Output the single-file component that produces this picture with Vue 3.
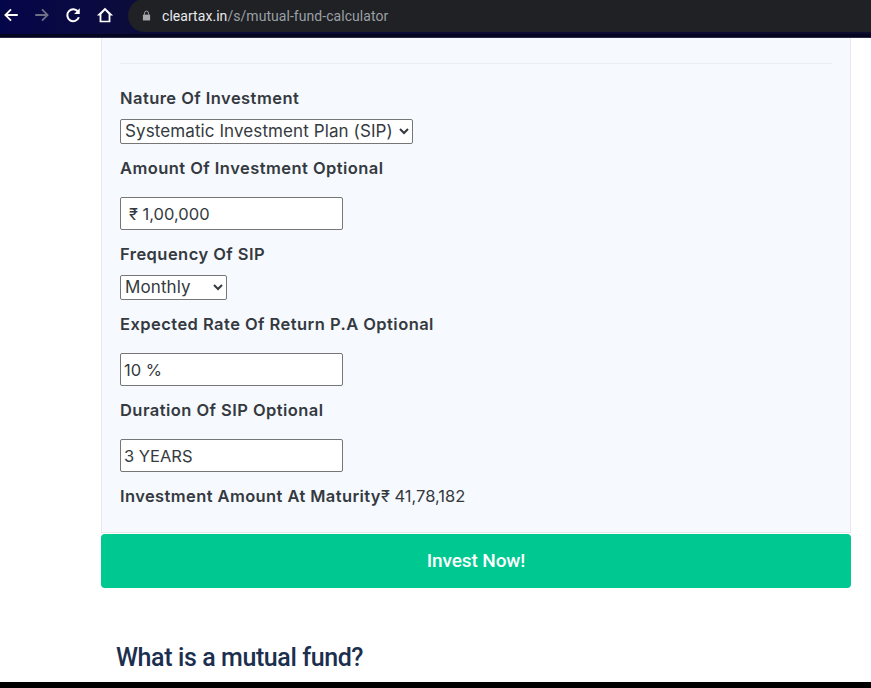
<script setup>
const fields = [
  { label: 'Nature Of Investment', type: 'select', cls: 'sel-wide', options: ['Systematic Investment Plan (SIP)'] },
  { label: 'Amount Of Investment Optional', type: 'input', value: '₹ 1,00,000', cls: 'indent' },
  { label: 'Frequency Of SIP', type: 'select', cls: 'sel-small', options: ['Monthly'] },
  { label: 'Expected Rate Of Return P.A Optional', type: 'input', value: '10 %' },
  { label: 'Duration Of SIP Optional', type: 'input', value: '3 YEARS' }
]
</script>

<template>
  <div class="page">
    <header class="chrome">
      <div class="nav">
        <svg class="ico" viewBox="0 0 16 16" width="18" height="18"><path d="M14 8H3M8 3L3 8l5 5" fill="none" stroke="#fff" stroke-width="1.600"/></svg>
        <svg class="ico" viewBox="0 0 16 16" width="18" height="18"><path d="M2 8h11M8 3l5 5-5 5" fill="none" stroke="#6f7086" stroke-width="1.600"/></svg>
        <svg class="ico reload" viewBox="0 0 16 16" width="18" height="18"><path d="M12.600 5.200A5.300 5.300 0 1 0 13.200 10" fill="none" stroke="#fff" stroke-width="1.800"/><path d="M14 2v5H9z" fill="#fff"/></svg>
        <svg class="ico" viewBox="0 0 16 16" width="18" height="18"><path d="M8 1.500L.8 8.500h2.400V14.500h9.600V8.500h2.400zM4.800 13V7.300L8 4.100l3.200 3.200V13z" fill="#fff" fill-rule="evenodd"/></svg>
      </div>
      <div class="omnibox">
        <svg class="lock" viewBox="0 0 10 12" width="9" height="11"><path d="M2.800 5V3.300a2.200 2.200 0 0 1 4.400 0V5" fill="none" stroke="#a8a9ad"/><path d="M1 5h8v6.500H1z" fill="#a8a9ad"/></svg>
        <span class="host">cleartax.in</span><span class="path">/s/mutual-fund-calculator</span>
      </div>
    </header>

    <main class="content">
      <section class="card">
        <div class="divider"></div>
        <div class="form">
          <div v-for="f in fields" :key="f.label" class="field" :class="f.type">
            <label>{{ f.label }}</label>
            <select v-if="f.type === 'select'" :class="f.cls">
              <option v-for="o in f.options" :key="o">{{ o }}</option>
            </select>
            <input v-else type="text" :value="f.value" :class="f.cls" />
          </div>
          <p class="result"><strong>Investment Amount At Maturity</strong>₹ 41,78,182</p>
        </div>
      </section>
      <button class="invest">Invest Now!</button>
      <h2>What is a mutual fund?</h2>
    </main>
    <div class="bottom"></div>
  </div>
</template>

<style scoped>
.page {
  width: 871px;
  height: 688px;
  overflow: hidden;
  display: flex;
  flex-direction: column;
  background: #fff;
  font-family: "Inter", "Liberation Sans", sans-serif;
}
.chrome {
  height: 38px;
  flex: none;
  box-sizing: border-box;
  display: flex;
  align-items: flex-start;
  background: linear-gradient(90deg, #05054a, #0c0c3c 15%, #0c0c30);
  border-bottom: 1px solid #2a2a48;
  box-shadow: inset 0 -3px 0 #05051f;
}
.nav {
  width: 128px;
  height: 30px;
  flex: none;
  display: flex;
  align-items: center;
  gap: 13.500px;
  padding-left: 1.500px;
  box-sizing: border-box;
}
.ico { flex: none; }
.reload { margin: 0 1px 0 -1px; }
.omnibox {
  flex: 1;
  height: 33px;
  margin-top: -1px;
  display: flex;
  align-items: center;
  padding-left: 14px;
  border-radius: 17px 0 0 17px;
  background: #202124;
  font-family: "Roboto", sans-serif;
  font-size: 14px;
  letter-spacing: 0.05px;
}
.lock { margin-right: 11px; }
.host { color: #e8eaed; }
.path { color: #9aa0a6; }
.content {
  flex: 1;
  min-height: 0;
  padding-left: 101px;
  width: 750px;
}
.card {
  box-sizing: border-box;
  height: 495px;
  background: #f6f9fe;
  border: 1px solid #e6e8ec;
  border-width: 0 1px 1px;
  padding: 25px 18px 0;
}
.divider {
  height: 1px;
  background: #ebeef2;
}
.form {
  padding-top: 24px;
}
.field label {
  display: block;
  color: #343a40;
  font-size: 16.500px;
  font-weight: 600;
  line-height: 20px;
  letter-spacing: 0.45px;
}
.field.select label { margin-bottom: 11px; }
.field.input label { margin-bottom: 19px; }
.field.select { margin-bottom: 14px; }
.field.input { margin-bottom: 14px; }
select, input {
  display: block;
  box-sizing: border-box;
  font-family: "Inter", sans-serif;
  color: #343a40;
  background: #fff;
  border: 1px solid #767676;
  border-radius: 2px;
}
select {
  height: 25px;
  padding: 0 0 2px;
  font-size: 17px;
  letter-spacing: 0.1px;
}
.sel-wide { width: 293px; }
.sel-small { width: 107px; }
input {
  width: 223px;
  height: 33px;
  padding: 0 3px;
  font-size: 16.500px;
}
input.indent { padding-left: 8px; }
.result {
  margin: 0;
  font-size: 16.500px;
  line-height: 20px;
  color: #343a40;
}
.result strong {
  font-weight: 600;
  letter-spacing: 0.4px;
}
.invest {
  display: block;
  width: 750px;
  height: 54px;
  margin-top: 1px;
  padding-bottom: 2px;
  border: 0;
  border-radius: 4px;
  background: #00c891;
  color: #fff;
  font-family: "Roboto", sans-serif;
  font-size: 19px;
  font-weight: 500;
  letter-spacing: -0.1px;
}
h2 {
  margin: 52px 0 0 15px;
  font-family: "Roboto", sans-serif;
  font-size: 25px;
  font-weight: 500;
  line-height: 36px;
  color: #1c2f4f;
  letter-spacing: -0.4px;
}
.bottom {
  height: 6px;
  flex: none;
  background: #000;
}
</style>
